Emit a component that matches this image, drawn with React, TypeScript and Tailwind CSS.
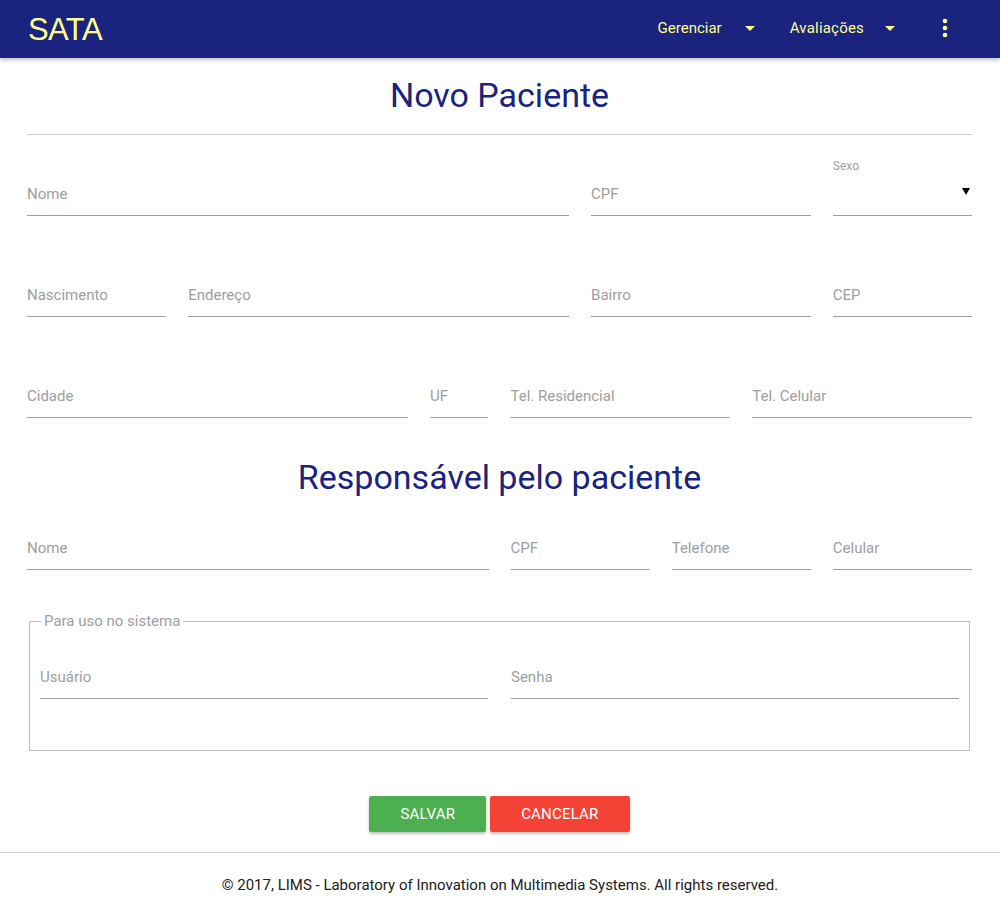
import React from 'react';

function DropIcon() {
  return (
    <svg width="24" height="24" viewBox="0 0 24 24" className="fill-[#ffff8d]">
      <path d="M7 10l5 5 5-5z" />
    </svg>
  );
}

function MoreIcon() {
  return (
    <svg width="28" height="28" viewBox="0 0 24 24" className="fill-[#ffff8d]">
      <circle cx="12" cy="6" r="2" />
      <circle cx="12" cy="12" r="2" />
      <circle cx="12" cy="18" r="2" />
    </svg>
  );
}

interface FieldProps {
  label: string;
  span: string;
}

function Field({ label, span }: FieldProps) {
  return (
    <div className={`${span} h-[46px] border-b border-[#9e9e9e] flex items-end pb-[12px]`}>
      <label className="text-[15px] leading-[18px] text-[#9e9e9e]">{label}</label>
    </div>
  );
}

function SelectField() {
  return (
    <div className="col-span-2 relative h-[46px] border-b border-[#9e9e9e] flex items-end justify-end pb-[20px] pr-[2px]">
      <span className="absolute left-0 top-[-11px] text-[12px] leading-[14px] text-[#9e9e9e]">Sexo</span>
      <svg width="8" height="7" viewBox="0 0 8 7">
        <polygon points="0,0 8,0 4,7" fill="#000" />
      </svg>
    </div>
  );
}

export default function App() {
  return (
    <div className="min-h-[921px] bg-white font-['Roboto',sans-serif] text-[#212121] flex flex-col">
      <header className="h-[58px] bg-[#1a237e] shadow-[0_2px_4px_rgba(0,0,0,0.25)] flex items-center justify-between pl-[28px] pr-[26px] relative z-10">
        <span className="font-['Liberation_Sans',Arial,sans-serif] text-[31px] tracking-[-0.6px] text-[#ffff8d] leading-none">SATA</span>
        <nav className="flex items-center -mt-[2px]">
          <a className="flex items-center pl-[15px] pr-[13px] text-[15px] text-[#ffff8d]">
            Gerenciar
            <span className="ml-[16px]"><DropIcon /></span>
          </a>
          <a className="flex items-center px-[15px] text-[15px] tracking-[0.2px] text-[#ffff8d]">
            Avaliações
            <span className="ml-[14px] mr-[1px]"><DropIcon /></span>
          </a>
          <a className="flex items-center pl-[13px] pr-[15px]">
            <MoreIcon />
          </a>
        </nav>
      </header>

      <main className="pl-[27px] pr-[28px]">
        <h1 className="mt-[17px] text-center text-[34px] leading-[40px] text-[#1a237e]">Novo Paciente</h1>
        <hr className="mt-[19px] border-t border-[#cccccc]" />

        <div className="mt-[35px] grid grid-cols-12 gap-x-[22px] gap-y-[55px]">
          <Field label="Nome" span="col-span-7" />
          <Field label="CPF" span="col-span-3" />
          <SelectField />

          <Field label="Nascimento" span="col-span-2" />
          <Field label="Endereço" span="col-span-5" />
          <Field label="Bairro" span="col-span-3" />
          <Field label="CEP" span="col-span-2" />

          <Field label="Cidade" span="col-span-5" />
          <Field label="UF" span="col-span-1" />
          <Field label="Tel. Residencial" span="col-span-3" />
          <Field label="Tel. Celular" span="col-span-3" />
        </div>

        <h2 className="mt-[39px] text-center text-[34px] leading-[40px] text-[#1a237e]">Responsável pelo paciente</h2>

        <div className="mt-[27px] grid grid-cols-12 gap-x-[22px]">
          <Field label="Nome" span="col-span-6" />
          <Field label="CPF" span="col-span-2" />
          <Field label="Telefone" span="col-span-2" />
          <Field label="Celular" span="col-span-2" />
        </div>

        <fieldset className="mt-[42px] mx-[2px] border border-[#c0c0c0] px-[10px] pb-[51px]">
          <legend className="ml-[1px] px-[3px] text-[15px] leading-[18px] text-[#9e9e9e]">Para uso no sistema</legend>
          <div className="mt-[23px] grid grid-cols-2 gap-x-[23px]">
            <Field label="Usuário" span="col-span-1" />
            <Field label="Senha" span="col-span-1" />
          </div>
        </fieldset>

        <div className="mt-[45px] flex justify-center gap-[4px]">
          <button className="h-[36px] px-[31px] rounded-[2px] bg-[#4caf50] text-white text-[15px] uppercase tracking-[0.2px] shadow-[0_2px_3px_rgba(0,0,0,0.25)]">
            Salvar
          </button>
          <button className="h-[36px] px-[31px] rounded-[2px] bg-[#f44336] text-white text-[15px] uppercase tracking-[0.2px] shadow-[0_2px_3px_rgba(0,0,0,0.25)]">
            Cancelar
          </button>
        </div>
      </main>

      <footer className="mt-[20px] border-t border-[#d0d0d0] pt-[23px] pb-[27px] text-center text-[15px] leading-[18px] text-[#212121]">
        © 2017, LIMS - Laboratory of Innovation on Multimedia Systems. All rights reserved.
      </footer>
    </div>
  );
}
